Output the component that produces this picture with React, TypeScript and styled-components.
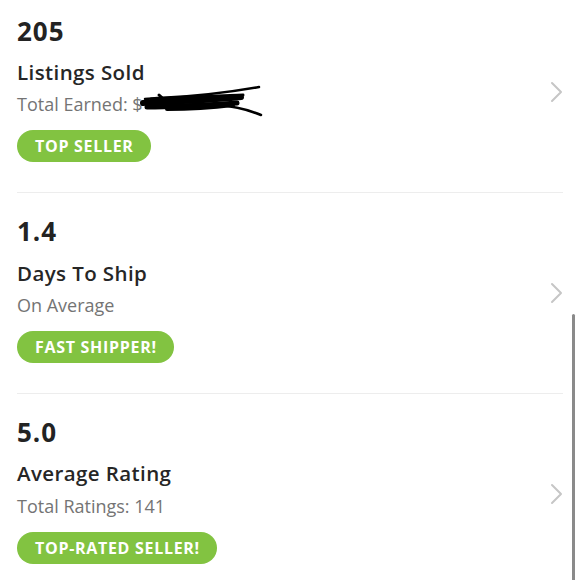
import React from 'react';
import styled, { createGlobalStyle } from 'styled-components';

const GlobalStyle = createGlobalStyle`
  body {
    margin: 0;
    background: #ffffff;
    font-family: 'Open Sans', 'Lato', sans-serif;
    overflow: hidden;
  }
`;

const stats = [
  { value: '205', label: 'Listings Sold', sub: 'Total Earned: $', badge: 'TOP SELLER', redacted: true },
  { value: '1.4', label: 'Days To Ship', sub: 'On Average', badge: 'FAST SHIPPER!' },
  { value: '5.0', label: 'Average Rating', sub: 'Total Ratings: 141', badge: 'TOP-RATED SELLER!' },
];

const Scribble = () => (
  <ScribbleSvg width="130" height="34" viewBox="0 0 130 34">
    <g fill="none" stroke="#000" strokeLinecap="round">
      <path d="M8 14 C30 12 60 13 122 2" strokeWidth="2.5" />
      <path d="M6 18 C40 16 80 15 104 12" strokeWidth="6" />
      <path d="M10 22 C40 22 70 20 100 18" strokeWidth="5" />
      <path d="M20 20 C60 19 90 16 124 30" strokeWidth="2.5" />
      <path d="M22 10 C26 14 30 18 40 22" strokeWidth="3" />
      <path d="M14 14 C50 12 80 11 106 10" strokeWidth="3" />
      <path d="M30 24 C60 24 80 22 96 20" strokeWidth="4" />
    </g>
  </ScribbleSvg>
);

const Chevron = () => (
  <ChevronSvg width="13" height="22" viewBox="0 0 13 22">
    <polyline points="2,2 11,11 2,20" fill="none" stroke="#c6c6c6" strokeWidth="2" strokeLinecap="round" strokeLinejoin="round" />
  </ChevronSvg>
);

const App = () => {
  return (
    <>
      <GlobalStyle />
      <Page>
        {stats.map((s) => (
          <Row key={s.label}>
            <Info>
              <Value>{s.value}</Value>
              <Label>{s.label}</Label>
              <Sub>
                {s.sub}
                {s.redacted && <Scribble />}
              </Sub>
              <Badge>{s.badge}</Badge>
            </Info>
            <Chevron />
          </Row>
        ))}
        <ScrollThumb />
      </Page>
    </>
  );
};

export default App;

const Page = styled.div`
  position: relative;
  width: 580px;
  height: 580px;
  overflow: hidden;
  padding: 0 17px;
  box-sizing: border-box;
`;

const Row = styled.div`
  display: flex;
  align-items: center;
  justify-content: space-between;
  padding: 15.5px 0 30px;
  border-bottom: 1px solid #ededed;
  & + & {
    padding-top: 23.5px;
  }
`;

const Info = styled.div`
  display: flex;
  flex-direction: column;
  align-items: flex-start;
`;

const Value = styled.div`
  font-size: 26px;
  line-height: 30px;
  font-weight: 700;
  letter-spacing: 1px;
  color: #232323;
`;

const Label = styled.div`
  margin-top: 13.2px;
  font-size: 20.5px;
  line-height: 26px;
  font-weight: 600;
  letter-spacing: 0.4px;
  color: #262626;
`;

const Sub = styled.div`
  position: relative;
  margin-top: 7.2px;
  font-size: 18px;
  line-height: 24px;
  color: #747474;
`;

const ScribbleSvg = styled.svg`
  position: absolute;
  left: 120px;
  top: -7px;
`;

const Badge = styled.div`
  margin-top: 14px;
  height: 32px;
  padding: 0 17px 0 18px;
  border-radius: 16px;
  background: #82c341;
  color: #ffffff;
  font-size: 16px;
  font-weight: 700;
  letter-spacing: 0.7px;
  line-height: 32px;
`;

const ChevronSvg = styled.svg`
  flex-shrink: 0;
  margin-top: 6.5px;
`;

const ScrollThumb = styled.div`
  position: absolute;
  right: 5px;
  top: 314px;
  width: 3px;
  height: 280px;
  border-radius: 2px;
  background: #8a8a8a;
`;
